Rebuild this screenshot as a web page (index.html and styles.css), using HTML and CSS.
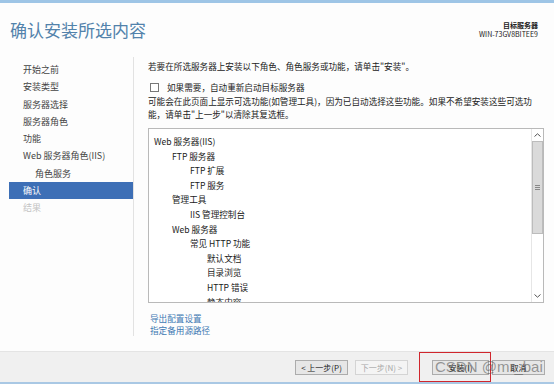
FILE: index.html
```html
<!DOCTYPE html>
<html lang="zh-CN">
<head>
  <meta charset="UTF-8" />
  <title>确认安装所选内容</title>
  <link rel="stylesheet" href="styles.css">
</head>
<body>
  <div class="window">

    <!-- Header -->
    <header class="top">
      <h1 class="title">确认安装所选内容</h1>
      <div class="target">
        <div class="target-label">目标服务器</div>
        <div class="target-name">WIN-73GV8BITEE9</div>
      </div>
    </header>

    <div class="main">
      <!-- Wizard steps -->
      <nav class="steps">
        <div class="step">开始之前</div>
        <div class="step">安装类型</div>
        <div class="step">服务器选择</div>
        <div class="step">服务器角色</div>
        <div class="step">功能</div>
        <div class="step">Web 服务器角色(IIS)</div>
        <div class="step sub">角色服务</div>
        <div class="step active">确认</div>
        <div class="step disabled">结果</div>
      </nav>

      <section class="content">
        <p class="intro">若要在所选服务器上安装以下角色、角色服务或功能，请单击"安装"。</p>
        <div class="restart">
          <span class="box"></span>
          <span>如果需要，自动重新启动目标服务器</span>
        </div>
        <p class="note">可能会在此页面上显示可选功能(如管理工具)，因为已自动选择这些功能。如果不希望安装这些可选功<br>能，请单击"上一步"以清除其复选框。</p>

        <div class="listbox">
          <div class="items">
            <div class="item lv0">Web 服务器(IIS)</div>
            <div class="item lv1">FTP 服务器</div>
            <div class="item lv2">FTP 扩展</div>
            <div class="item lv2">FTP 服务</div>
            <div class="item lv1">管理工具</div>
            <div class="item lv2">IIS 管理控制台</div>
            <div class="item lv1">Web 服务器</div>
            <div class="item lv2">常见 HTTP 功能</div>
            <div class="item lv3">默认文档</div>
            <div class="item lv3">目录浏览</div>
            <div class="item lv3">HTTP 错误</div>
            <div class="item lv3">静态内容</div>
          </div>
          <div class="scrollbar">
            <div class="arrow">
              <svg width="7" height="4" viewBox="0 0 7 4"><path d="M0.5 3.5 L3.5 0.8 L6.5 3.5" fill="none" stroke="#555" stroke-width="1"/></svg>
            </div>
            <div class="track">
              <div class="thumb">
                <span class="grip"></span>
              </div>
            </div>
            <div class="arrow">
              <svg width="7" height="4" viewBox="0 0 7 4"><path d="M0.5 0.5 L3.5 3.2 L6.5 0.5" fill="none" stroke="#555" stroke-width="1"/></svg>
            </div>
          </div>
        </div>

        <div class="links">
          <a href="#">导出配置设置</a>
          <a href="#">指定备用源路径</a>
        </div>
      </section>
    </div>

    <!-- Buttons -->
    <footer class="buttons">
      <button class="btn">&lt; 上一步(P)</button>
      <button class="btn" disabled>下一步(N) &gt;</button>
      <button class="btn install">安装(I)</button>
      <button class="btn">取消</button>
      <div class="mark"></div>
      <div class="watermark">CSDN @mr_bai</div>
    </footer>

  </div>
</body>
</html>
```

FILE: styles.css
```css
body {
  margin: 0;
  font-family: "Noto Sans CJK SC", "Noto Sans", sans-serif;
  background: #ffffff;
  color: #333;
  overflow: hidden;
}

.window {
  display: flex;
  flex-direction: column;
  width: 554px;
  height: 384px;
  box-sizing: border-box;
  border-top: 3px solid #9ec5e6;
  border-bottom: 2px solid #a9c8e4;
  background: #fdfdfd;
}

/* header */
.top {
  display: flex;
  justify-content: space-between;
  height: 54px;
  padding: 0 16px 0 10px;
  box-sizing: border-box;
}

.title {
  margin: 17px 0 0;
  font-size: 17px;
  line-height: 20px;
  font-weight: 400;
  color: #5282ab;
}

.target {
  margin-top: 18px;
  text-align: right;
  font-size: 7px;
  line-height: 9px;
  color: #222;
}

.target-label {
  font-weight: bold;
}

/* body */
.main {
  flex: 1;
  display: flex;
}

.steps {
  width: 124px;
  padding: 4px 0 0 9px;
  margin-bottom: 15px;
  border-right: 1px solid #e2e2e2;
  display: flex;
  flex-direction: column;
}

.step {
  height: 17.3px;
  line-height: 17.3px;
  padding-left: 14px;
  font-size: 9px;
  color: #444;
  white-space: nowrap;
}

.step.sub {
  padding-left: 26px;
}

.step.active {
  background: #3d6fb6;
  color: #fff;
}

.step.disabled {
  color: #c4c4c4;
}

.content {
  flex: 1;
  padding: 3px 10px 0 14px;
  font-size: 8.6px;
  color: #222;
}

.intro {
  margin: 0;
  line-height: 12px;
}

.restart {
  display: flex;
  align-items: center;
  gap: 8px;
  margin-top: 9px;
  padding-left: 2px;
  line-height: 12px;
}

.box {
  width: 7px;
  height: 7px;
  border: 1px solid #777;
  background: #fff;
}

.note {
  margin: 2px 0 0;
  line-height: 13px;
  white-space: nowrap;
}

/* list of selected items */
.listbox {
  display: flex;
  height: 175px;
  margin-top: 7px;
  border: 1px solid #b9b9b9;
  background: #fff;
  box-sizing: border-box;
}

.items {
  flex: 1;
  padding: 5px 0 0 5px;
  overflow: hidden;
  color: #1a1a1a;
}

.item {
  height: 14.6px;
  line-height: 14.6px;
  white-space: nowrap;
}

.lv1 { padding-left: 18px; }
.lv2 { padding-left: 36px; }
.lv3 { padding-left: 53px; }

.scrollbar {
  width: 11px;
  display: flex;
  flex-direction: column;
  border-left: 1px solid #e6e6e6;
}

.arrow {
  height: 12px;
  display: flex;
  align-items: center;
  justify-content: center;
}

.track {
  flex: 1;
}

.thumb {
  height: 93px;
  background: #dadada;
  border: 1px solid #bcbcbc;
  box-sizing: border-box;
  display: flex;
  align-items: center;
  justify-content: center;
}

.grip {
  width: 5px;
  height: 5px;
  background: repeating-linear-gradient(#888 0 1px, transparent 1px 2px);
}

.links {
  display: flex;
  flex-direction: column;
  margin-top: 9px;
  padding-left: 2px;
}

.links a {
  line-height: 12px;
  color: #3f79b3;
  text-decoration: none;
}

/* footer */
.buttons {
  position: relative;
  height: 30px;
  display: flex;
  align-items: center;
  justify-content: flex-end;
  gap: 7px;
  padding-right: 9px;
  background: #f0f0f0;
  border-top: 1px solid #e4e4e4;
}

.btn {
  width: 53px;
  height: 15px;
  padding: 0;
  font-family: inherit;
  font-size: 8px;
  color: #222;
  background: #e6e6e6;
  border: 1px solid #acacac;
}

.btn:disabled {
  color: #a8a8a8;
  background: #f4f4f4;
  border-color: #d4d4d4;
}

.btn.install {
  width: 57px;
  margin-left: 17px;
}

.btn.install + .btn {
  margin-left: -4px;
}

.mark {
  position: absolute;
  left: 419px;
  top: 0;
  width: 72px;
  height: 30px;
  border: 1.5px solid #d0262d;
  box-sizing: border-box;
}

.watermark {
  position: absolute;
  left: 435px;
  top: 6px;
  font-family: "Liberation Sans", sans-serif;
  font-size: 15px;
  line-height: 17px;
  color: rgba(90, 90, 90, 0.6);
  white-space: nowrap;
  pointer-events: none;
}
```
